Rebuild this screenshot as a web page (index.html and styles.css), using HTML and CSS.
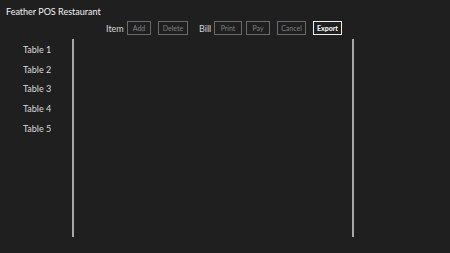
FILE: index.html
```html
<!DOCTYPE html>
<html lang="en">
<head>
  <meta charset="UTF-8">
  <title>Feather POS Restaurant</title>
  <link rel="stylesheet" href="styles.css">
</head>
<body>
  <div class="app">
    <h1 class="app-title">Feather POS Restaurant</h1>

    <!-- Toolbar -->
    <div class="toolbar">
      <span class="group-label">Item</span>
      <button class="tool-btn w-add">Add</button>
      <button class="tool-btn w-delete">Delete</button>
      <span class="group-label bill">Bill</span>
      <button class="tool-btn w-print">Print</button>
      <button class="tool-btn w-pay">Pay</button>
      <button class="tool-btn w-cancel">Cancel</button>
      <button class="tool-btn w-export active">Export</button>
    </div>

    <div class="main">
      <!-- Tables -->
      <ul class="table-list">
        <li>Table 1</li>
        <li>Table 2</li>
        <li>Table 3</li>
        <li>Table 4</li>
        <li>Table 5</li>
      </ul>
      <!-- Order panel -->
      <div class="order-panel"></div>
      <div class="side-panel"></div>
    </div>
  </div>
</body>
</html>
```

FILE: styles.css
```css
html, body {
  margin: 0;
  height: 100%;
}
body {
  background: #1f1f1f;
  font-family: Lato, "Noto Sans", sans-serif;
  color: #e6e6e6;
  overflow: hidden;
}
.app {
  height: 253px;
  display: flex;
  flex-direction: column;
}
.app-title {
  margin: 0;
  padding: 5px 0 0 6px;
  font-size: 9px;
  font-weight: normal;
  line-height: 13px;
  color: #f2f2f2;
}
.toolbar {
  display: flex;
  align-items: center;
  height: 14px;
  margin: 3px 0 0 106px;
}
.group-label {
  width: 21px;
  font-size: 9px;
  color: #d8d8d8;
}
.group-label.bill {
  width: 15px;
  margin-left: 11px;
}
.tool-btn {
  height: 14px;
  padding: 0;
  margin: 0 7px 0 0;
  border: 1px solid #6a6a6a;
  background: transparent;
  color: #808080;
  font-family: inherit;
  font-size: 7px;
  line-height: 12px;
  box-sizing: border-box;
}
.tool-btn.active {
  border-color: #f0f0f0;
  color: #ffffff;
  font-weight: bold;
}
.w-add { width: 24px; }
.w-delete { width: 30px; margin-right: 0; }
.w-print { width: 28px; margin-right: 4px; }
.w-pay { width: 24px; }
.w-cancel { width: 29px; }
.w-export { width: 29px; }
.main {
  display: grid;
  grid-template-columns: 72px 282px 1fr;
  margin-top: 4px;
  height: 198px;
}
.table-list {
  list-style: none;
  margin: 0;
  padding: 1px 0 0 23px;
}
.table-list li {
  font-size: 9px;
  line-height: 19.7px;
  color: #dcdcdc;
}
.order-panel {
  border-left: 2px solid #a8a8a8;
  border-right: 2px solid #a8a8a8;
}
```
